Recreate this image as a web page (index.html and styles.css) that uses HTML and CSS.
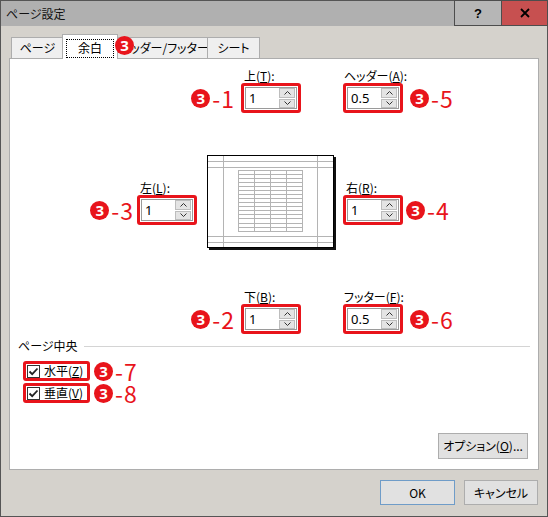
FILE: index.html
```html
<!DOCTYPE html>
<html lang="ja">
<head>
<meta charset="utf-8">
<title>ページ設定</title>
<link rel="stylesheet" href="styles.css">
</head>
<body>
<div class="window">
  <div class="titlebar">
    <span class="title">ページ設定</span>
    <div class="caption-buttons">
      <span class="cap-btn help">?</span>
      <span class="cap-btn close">
        <svg width="10" height="10" viewBox="0 0 10 10"><path d="M1 1 9 9M9 1 1 9" stroke="#000" stroke-width="1.8" fill="none"/></svg>
      </span>
    </div>
  </div>

  <div class="dialog">
    <div class="tabs">
      <span class="tab tab-page">ページ</span>
      <span class="tab active"><span class="focus">余白</span></span>
      <span class="tab tab-header">ヘッダー/フッター</span>
      <span class="tab tab-sheet">シート</span>
      <span class="mark tab-mark">3</span>
    </div>

    <div class="panel">
      <!-- top / header margins -->
      <div class="margin-row row-top">
        <div class="field ann-left">
          <span class="lbl">上(<u>T</u>):</span>
          <span class="callout"><span class="mark">3</span><span class="num">-1</span></span>
          <span class="hl">
            <span class="spin">
              <span class="val">1</span>
              <span class="arrows">
                <span class="arr"><svg width="7" height="4" viewBox="0 0 7 4"><path d="M0.5 3.5 3.5 0.5 6.5 3.5" stroke="#333" fill="none"/></svg></span>
                <span class="arr"><svg width="7" height="4" viewBox="0 0 7 4"><path d="M0.5 0.5 3.5 3.5 6.5 0.5" stroke="#333" fill="none"/></svg></span>
              </span>
            </span>
          </span>
        </div>
        <div class="field ann-right gap-far">
          <span class="lbl kana">ヘッダー(<u>A</u>):</span>
          <span class="hl">
            <span class="spin">
              <span class="val">0.5</span>
              <span class="arrows">
                <span class="arr"><svg width="7" height="4" viewBox="0 0 7 4"><path d="M0.5 3.5 3.5 0.5 6.5 3.5" stroke="#333" fill="none"/></svg></span>
                <span class="arr"><svg width="7" height="4" viewBox="0 0 7 4"><path d="M0.5 0.5 3.5 3.5 6.5 0.5" stroke="#333" fill="none"/></svg></span>
              </span>
            </span>
          </span>
          <span class="callout"><span class="mark">3</span><span class="num">-5</span></span>
        </div>
      </div>

      <!-- left / preview / right -->
      <div class="margin-row row-mid">
        <div class="field ann-left tight">
          <span class="lbl">左(<u>L</u>):</span>
          <span class="callout"><span class="mark">3</span><span class="num">-3</span></span>
          <span class="hl">
            <span class="spin">
              <span class="val">1</span>
              <span class="arrows">
                <span class="arr"><svg width="7" height="4" viewBox="0 0 7 4"><path d="M0.5 3.5 3.5 0.5 6.5 3.5" stroke="#333" fill="none"/></svg></span>
                <span class="arr"><svg width="7" height="4" viewBox="0 0 7 4"><path d="M0.5 0.5 3.5 3.5 6.5 0.5" stroke="#333" fill="none"/></svg></span>
              </span>
            </span>
          </span>
        </div>

        <div class="preview">
          <svg width="125" height="91" viewBox="0 0 125 91">
            <g stroke="#b4b4b4" stroke-width="1" fill="none">
              <path d="M0 5.5H125M0 11.5H125M0 80.5H125M0 86.5H125"/>
              <path d="M15.5 0V91M109.5 0V91"/>
              <rect x="30.5" y="14.5" width="64" height="61"/>
              <path d="M46.5 14.5V75.5M62.5 14.5V75.5M78.5 14.5V75.5"/>
              <path d="M30.5 18.5H94.5M30.5 22.5H94.5M30.5 26.5H94.5M30.5 30.5H94.5M30.5 34.5H94.5M30.5 38.5H94.5M30.5 42.5H94.5M30.5 46.5H94.5M30.5 50.5H94.5M30.5 54.5H94.5M30.5 58.5H94.5M30.5 62.5H94.5M30.5 67.5H94.5M30.5 71.5H94.5"/>
            </g>
          </svg>
        </div>

        <div class="field ann-right tight">
          <span class="lbl">右(<u>R</u>):</span>
          <span class="hl">
            <span class="spin">
              <span class="val">1</span>
              <span class="arrows">
                <span class="arr"><svg width="7" height="4" viewBox="0 0 7 4"><path d="M0.5 3.5 3.5 0.5 6.5 3.5" stroke="#333" fill="none"/></svg></span>
                <span class="arr"><svg width="7" height="4" viewBox="0 0 7 4"><path d="M0.5 0.5 3.5 3.5 6.5 0.5" stroke="#333" fill="none"/></svg></span>
              </span>
            </span>
          </span>
          <span class="callout"><span class="mark">3</span><span class="num">-4</span></span>
        </div>
      </div>

      <!-- bottom / footer margins -->
      <div class="margin-row row-bottom">
        <div class="field ann-left">
          <span class="lbl">下(<u>B</u>):</span>
          <span class="callout"><span class="mark">3</span><span class="num">-2</span></span>
          <span class="hl">
            <span class="spin">
              <span class="val">1</span>
              <span class="arrows">
                <span class="arr"><svg width="7" height="4" viewBox="0 0 7 4"><path d="M0.5 3.5 3.5 0.5 6.5 3.5" stroke="#333" fill="none"/></svg></span>
                <span class="arr"><svg width="7" height="4" viewBox="0 0 7 4"><path d="M0.5 0.5 3.5 3.5 6.5 0.5" stroke="#333" fill="none"/></svg></span>
              </span>
            </span>
          </span>
        </div>
        <div class="field ann-right gap-far">
          <span class="lbl kana">フッター(<u>F</u>):</span>
          <span class="hl">
            <span class="spin">
              <span class="val">0.5</span>
              <span class="arrows">
                <span class="arr"><svg width="7" height="4" viewBox="0 0 7 4"><path d="M0.5 3.5 3.5 0.5 6.5 3.5" stroke="#333" fill="none"/></svg></span>
                <span class="arr"><svg width="7" height="4" viewBox="0 0 7 4"><path d="M0.5 0.5 3.5 3.5 6.5 0.5" stroke="#333" fill="none"/></svg></span>
              </span>
            </span>
          </span>
          <span class="callout"><span class="mark">3</span><span class="num">-6</span></span>
        </div>
      </div>

      <!-- centering on page -->
      <div class="group-head">
        <span>ページ中央</span>
        <span class="group-line"></span>
      </div>
      <div class="check-row">
        <span class="check-hl">
          <span class="checkbox"><svg width="11" height="11" viewBox="0 0 11 11"><path d="M1.5 5.5 4.2 8.2 9.5 2.5" stroke="#222" stroke-width="1.8" fill="none"/></svg></span>
          <span>水平(<u>Z</u>)</span>
        </span>
        <span class="callout"><span class="mark">3</span><span class="num">-7</span></span>
      </div>
      <div class="check-row">
        <span class="check-hl">
          <span class="checkbox"><svg width="11" height="11" viewBox="0 0 11 11"><path d="M1.5 5.5 4.2 8.2 9.5 2.5" stroke="#222" stroke-width="1.8" fill="none"/></svg></span>
          <span>垂直(<u>V</u>)</span>
        </span>
        <span class="callout"><span class="mark">3</span><span class="num">-8</span></span>
      </div>

      <span class="btn options">オプション(<u>O</u>)...</span>
    </div>

    <div class="actions">
      <span class="btn ok">OK</span>
      <span class="btn cancel">キャンセル</span>
    </div>
  </div>
</div>
</body>
</html>
```

FILE: styles.css
```css
* {
  box-sizing: border-box;
}

html,
body {
  margin: 0;
  padding: 0;
}

body {
  width: 548px;
  height: 517px;
  background: #d5d2cc;
  color: #000;
  font: 12px/14px "Noto Sans CJK JP", sans-serif;
  font-feature-settings: "palt";
}

u {
  text-decoration: underline;
  text-underline-offset: 1px;
}

/* ---- window frame ---- */
.window {
  width: 548px;
  height: 517px;
  border: 1px solid #555;
  background: #d5d2cc;
  display: flex;
  flex-direction: column;
}

.titlebar {
  height: 25px;
  flex: none;
  background: #b0b0b0;
  display: flex;
  align-items: center;
}

.title {
  padding-left: 5px;
  color: #111;
}

.caption-buttons {
  margin-left: auto;
  display: flex;
  align-self: stretch;
  margin-top: -1px;
}

.cap-btn {
  height: 26px;
  display: flex;
  align-items: center;
  justify-content: center;
  border: 1px solid #4d4d4d;
}

.help {
  width: 48px;
  background: #b6b6b6;
  font: 700 13px/1 "Liberation Sans", sans-serif;
}

.close {
  width: 47px;
  margin-left: -1px;
  margin-right: -1px;
  background: #c75050;
}

/* ---- dialog body ---- */
.dialog {
  flex: 1;
  padding: 0 8px;
  display: flex;
  flex-direction: column;
}

.tabs {
  margin-top: 8px;
  height: 24px;
  padding-left: 2px;
  display: flex;
  align-items: flex-end;
  position: relative;
}

.tab {
  height: 21px;
  border: 1px solid #adadad;
  border-bottom: none;
  background: #efefef;
  display: flex;
  align-items: center;
  justify-content: center;
  margin-left: -1px;
  white-space: nowrap;
}

.tab-page {
  width: 53px;
  margin-left: 0;
}

.tab.active {
  width: 56px;
  height: 25px;
  margin: 0 -2px -1px -2px;
  background: #fff;
  position: relative;
  z-index: 2;
  padding-top: 2px;
}

.focus {
  padding: 1px 11px 2px;
  outline: 1px dotted #000;
  outline-offset: 0;
}

.tab-header {
  width: 93px;
  padding-left: 4px;
}

.tab-sheet {
  width: 53px;
}

/* numbered marks */
.mark {
  width: 19px;
  height: 19px;
  border-radius: 50%;
  background: #e8141b;
  color: #fff;
  font: 700 15px/19px "Noto Sans", sans-serif;
  text-align: center;
  flex: none;
}

.tab-mark {
  position: absolute;
  left: 106px;
  top: 2px;
  z-index: 3;
}

.callout {
  display: flex;
  align-items: center;
  color: #e8141b;
  font: 400 23px/1 "Noto Sans CJK JP", sans-serif;
  white-space: nowrap;
}

.num {
  margin-left: 2px;
  letter-spacing: 1px;
}

/* ---- tab panel ---- */
.panel {
  width: 530px;
  height: 412px;
  background: #fff;
  border: 1px solid #adadad;
  display: flex;
  flex-direction: column;
}

.margin-row {
  display: flex;
  align-items: flex-start;
}

.row-top {
  margin-top: 10px;
  padding-left: 177px;
}

.row-mid {
  margin-top: 42px;
  padding-left: 76px;
}

.row-bottom {
  margin-top: 42px;
  padding-left: 177px;
}

.field {
  display: grid;
  grid-template-rows: 14px 30px;
}

.field.ann-left {
  grid-template-columns: 48px 60px;
  column-gap: 6px;
  grid-template-areas: ". lbl" "ann box";
}

.field.ann-right {
  grid-template-columns: 60px 48px;
  column-gap: 7px;
  grid-template-areas: "lbl ." "box ann";
}

.field.tight {
  column-gap: 3px;
  margin-top: 26px;
}

.field.ann-right.tight {
  margin-left: 9px;
}

.gap-far {
  margin-left: 42px;
}

.field .lbl {
  grid-area: lbl;
  padding-left: 3px;
  white-space: nowrap;
}

.field .lbl.kana {
  padding-left: 1px;
}

.field .callout {
  grid-area: ann;
}

.field.ann-left .callout {
  justify-content: flex-end;
}

.field .hl {
  grid-area: box;
}

/* red highlight around a control */
.hl {
  display: block;
  border: 3px solid #e8141b;
  border-radius: 3px;
  padding: 1px;
}

.spin {
  display: flex;
  height: 22px;
  border: 1px solid #9a9a9a;
  background: #fff;
}

.val {
  flex: 1;
  padding-left: 3px;
  font: 13px/20px "Noto Sans", sans-serif;
}

.arrows {
  width: 17px;
  display: flex;
  flex-direction: column;
  gap: 1px;
  padding: 0 1px 0 0;
}

.arr {
  flex: 1;
  background: #e4e4e4;
  border: 1px solid #bdbdbd;
  display: flex;
  align-items: center;
  justify-content: center;
}

.preview {
  margin-left: 10px;
  width: 127px;
  height: 93px;
  border: 1px solid #000;
  box-shadow: 2px 2px 0 #111;
  background: #fff;
}

.preview svg {
  display: block;
}

/* ---- centering group ---- */
.group-head {
  margin-top: 5px;
  padding-left: 8px;
  padding-right: 8px;
  display: flex;
  align-items: center;
}

.group-line {
  flex: 1;
  margin-left: 6px;
  border-top: 1px solid #d4d4d4;
}

.check-row {
  display: flex;
  align-items: center;
  height: 20px;
  padding-left: 13px;
}

.group-head + .check-row {
  margin-top: 8px;
}

.check-row + .check-row {
  margin-top: 2px;
}

.check-hl {
  width: 67px;
  height: 20px;
  border: 3px solid #e8141b;
  border-radius: 3px;
  padding-left: 1px;
  display: flex;
  align-items: center;
  gap: 4px;
  white-space: nowrap;
}

.checkbox {
  width: 13px;
  height: 13px;
  border: 1px solid #333;
  background: #fff;
  display: flex;
  align-items: center;
  justify-content: center;
}

.check-row .callout {
  margin-left: 4px;
  height: 20px;
  line-height: 20px;
}

/* ---- buttons ---- */
.btn {
  display: flex;
  align-items: center;
  justify-content: center;
  background: #e1e1e1;
  border: 1px solid #adadad;
  white-space: nowrap;
}

.options {
  margin-top: auto;
  margin-right: 10px;
  margin-bottom: 10px;
  align-self: flex-end;
  width: 90px;
  height: 26px;
}

.actions {
  margin-top: 10px;
  display: flex;
  justify-content: flex-end;
  gap: 9px;
  padding-right: 1px;
}

.ok {
  width: 75px;
  height: 25px;
  border-color: #6f9cc8;
}

.cancel {
  width: 74px;
  height: 25px;
}
```
